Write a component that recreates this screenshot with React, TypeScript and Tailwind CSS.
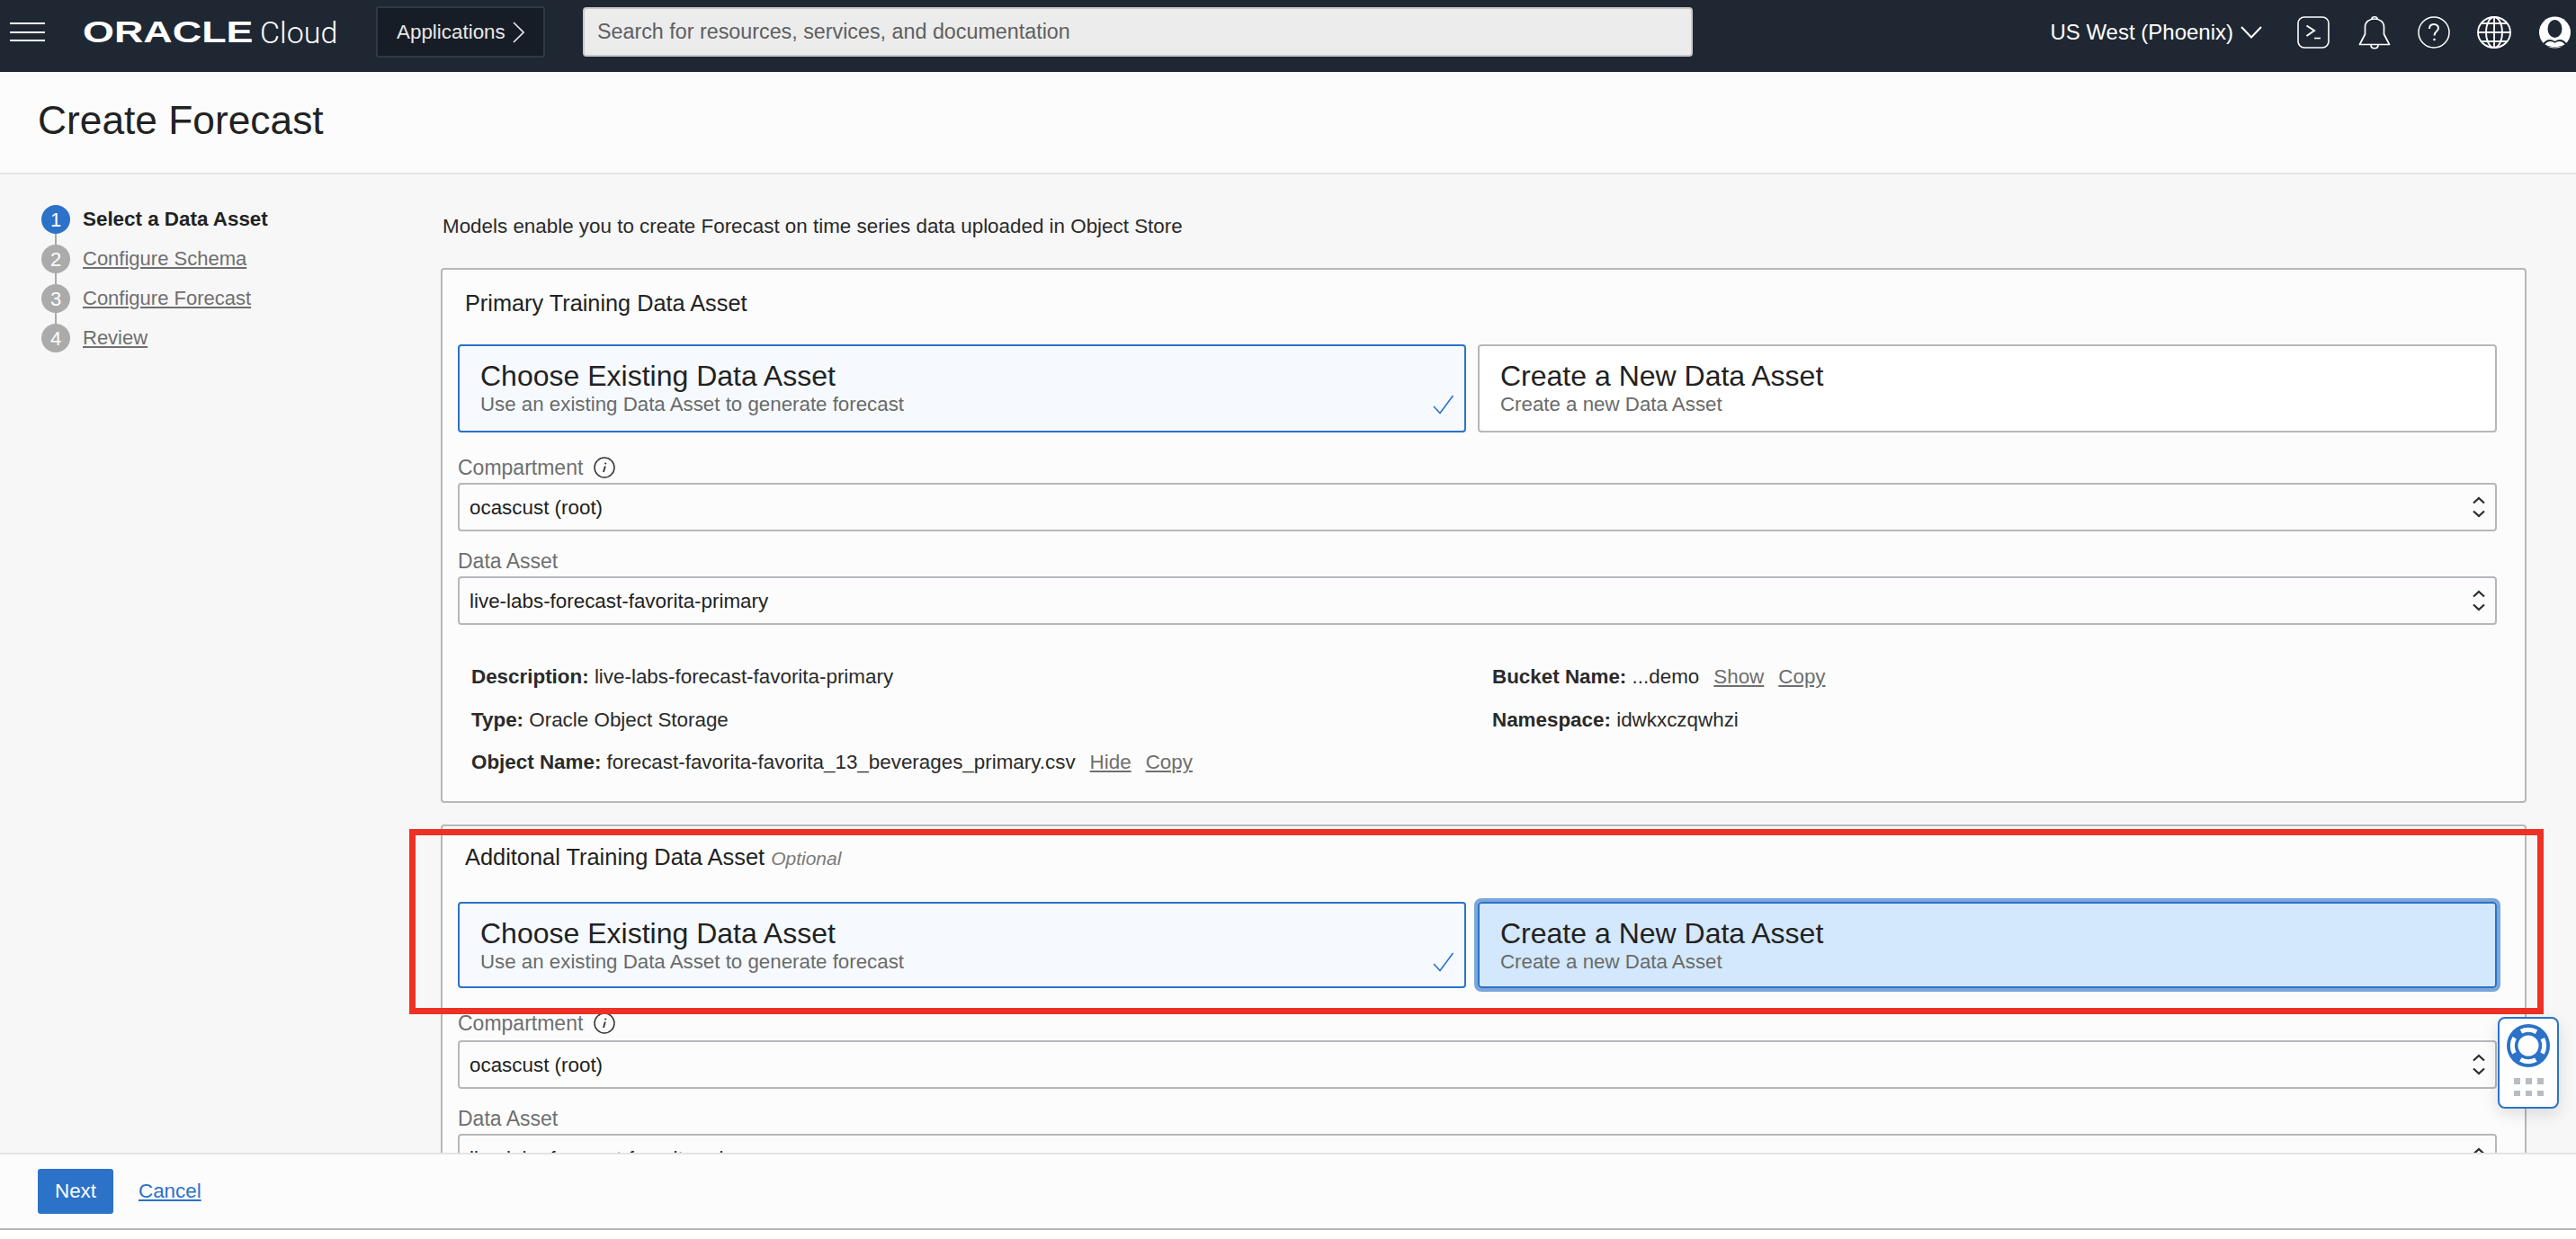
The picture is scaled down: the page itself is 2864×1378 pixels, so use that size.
const FONT = "font-['Liberation_Sans',Arial,sans-serif]";

function Hamburger() {
  return (
    <div className="flex flex-col justify-between w-[39px] h-[21px]">
      <div className="h-[2px] bg-white" />
      <div className="h-[2px] bg-white" />
      <div className="h-[2px] bg-white" />
    </div>
  );
}

function Terminal() {
  return (
    <svg width="36" height="36" viewBox="0 0 36 36" fill="none" stroke="white" strokeWidth="1.6">
      <rect x="1" y="1" width="34" height="34" rx="7" />
      <path d="M10.5 10.5 L19 16 L10.5 22" strokeWidth="2" />
      <path d="M19 24.5 H26" strokeWidth="1.6" />
    </svg>
  );
}

function Bell() {
  return (
    <svg width="36" height="38" viewBox="0 0 36 38" fill="none" stroke="white" strokeWidth="1.7" strokeLinejoin="round">
      <path d="M1.5 32.5 L7.5 21 V13 C7.5 7.5 12 4 18 4 C24 4 28.5 7.5 28.5 13 V21 L34.5 32.5 Z" />
      <path d="M15 4 C15 1 21 1 21 4" />
      <path d="M14 33 C14 38 22 38 22 33" />
    </svg>
  );
}

function Help() {
  return (
    <svg width="36" height="36" viewBox="0 0 36 36" fill="none" stroke="white" strokeWidth="1.5">
      <circle cx="18" cy="18" r="17" />
      <path d="M13 14 C13 10.5 15.5 9 18 9 C21 9 23 11 23 13.5 C23 16.5 18.5 17 18.5 21.5" strokeWidth="2" />
      <circle cx="18.5" cy="26" r="1.3" fill="white" stroke="none" />
    </svg>
  );
}

function Globe() {
  return (
    <svg width="38" height="36" viewBox="0 0 38 36" fill="none" stroke="white" strokeWidth="1.8">
      <ellipse cx="19" cy="18" rx="18" ry="17" />
      <ellipse cx="19" cy="18" rx="9" ry="17" />
      <path d="M19 1 V35" />
      <path d="M1 18 H37" />
      <path d="M4.5 8 H33.5" />
      <path d="M4.5 28 H33.5" />
    </svg>
  );
}

function Avatar() {
  return (
    <svg width="35" height="36" viewBox="0 0 35 36">
      <circle cx="17.5" cy="18" r="17.5" fill="white" />
      <ellipse cx="17.5" cy="14" rx="8" ry="10" fill="#1f2733" />
      <path d="M4 31 C8 25 13 25 17.5 28 C22 25 27 25 31 31 C27 33.5 22 34.5 17.5 34.5 C13 34.5 8 33.5 4 31 Z" fill="#1f2733" />
      <path d="M6.5 31.5 C10 27 14 27.5 17.5 30 C21 27.5 25 27 28.5 31.5 C25 33.5 21 34 17.5 34 C14 34 10 33.5 6.5 31.5 Z" fill="white" />
    </svg>
  );
}

function Chevrons() {
  return (
    <svg width="14" height="26" viewBox="0 0 14 26" fill="none" stroke="#2b2b2b" strokeWidth="2.2">
      <path d="M1 8.5 L7 3 L13 8.5" />
      <path d="M1 17.5 L7 23 L13 17.5" />
    </svg>
  );
}

function InfoIcon() {
  return (
    <svg width="24" height="24" viewBox="0 0 24 24" fill="none" stroke="#333" strokeWidth="1.5">
      <circle cx="12" cy="12" r="11" />
      <path d="M12.8 10.5 L11 17" strokeWidth="1.8" />
      <circle cx="13.2" cy="7.5" r="1.1" fill="#333" stroke="none" />
    </svg>
  );
}

function Tile({ title, sub, selected, focused, className }: { title: string; sub: string; selected?: boolean; focused?: boolean; className: string }) {
  const tone = selected
    ? "border-[#2b72c8] bg-[#f6faff]"
    : focused
      ? "border-[#2b72c8] bg-[#d3e8fc] outline-4 outline-[#7aa6db]"
      : "border-[#b5b8bb] bg-white";
  return (
    <div className={`relative border-2 rounded-[4px] pl-[23px] pt-[14px] ${tone} ${className}`}>
      <div className="text-[32px] leading-[39px] text-[#222]">{title}</div>
      <div className="text-[22.3px] leading-[24px] text-[#6a6a6a]">{sub}</div>
      {selected && (
        <svg className="absolute right-[11px] top-[54px]" width="24" height="22" viewBox="0 0 24 22" fill="none" stroke="#2b72c8" strokeWidth="1.6">
          <path d="M1 13 L8 20.5 L22.5 1" />
        </svg>
      )}
    </div>
  );
}

function SelectBox({ value }: { value: string }) {
  return (
    <div className="h-[54px] w-[2267px] shrink-0 flex items-center justify-between border-2 border-[#b5b8bb] rounded-[4px] bg-[#fcfcfc] pl-[11px] pr-[11px] text-[22.4px] text-[#1f1f1f]">
      <span className="pt-[2px]">{value}</span>
      <Chevrons />
    </div>
  );
}

function FieldLabel({ children, className }: { children: React.ReactNode; className: string }) {
  return <div className={`h-[24px] flex items-center gap-[12px] text-[23px] leading-[24px] text-[#6f6f6f] ${className}`}>{children}</div>;
}

function Detail({ label, value, links }: { label: string; value: string; links?: string[] }) {
  return (
    <div className="h-[32px] leading-[32px] text-[22.4px] text-[#2a2a2a] whitespace-nowrap">
      <span className="font-bold">{label}</span> {value}
      {links?.map((l) => (
        <span key={l} className="ml-[16px] text-[#6f6f6f] underline">{l}</span>
      ))}
    </div>
  );
}

export default function App() {
  const steps = ["Select a Data Asset", "Configure Schema", "Configure Forecast", "Review"];
  return (
    <div className={`relative h-[1378px] w-full overflow-hidden flex flex-col bg-white ${FONT}`}>
      <header className="h-[80px] shrink-0 pb-[9px] bg-[#1f2733] flex items-center text-white">
        <div className="ml-[11px] mr-[42px]"><Hamburger /></div>
        <div className="relative w-[183px] h-[34px] leading-[34px] mr-[14px]">
          <span className="absolute left-0 top-0 origin-left scale-x-[1.36] text-[33px] font-bold leading-[34px]">ORACLE</span>
        </div>
        <span className="font-['Roboto',sans-serif] font-light text-[34px] leading-[40px] w-[88px] mr-[41px]">Cloud</span>
        <div className="w-[188px] h-[57px] mr-[42px] flex items-center pl-[21px] gap-[8px] border-2 border-[#2f3a47] rounded-[3px] bg-[#171d26] text-[22.4px] text-[#e8e8e8]">
          Applications
          <svg width="13" height="24" viewBox="0 0 13 24" fill="none" stroke="#e8e8e8" strokeWidth="1.6"><path d="M1 1 L12 12 L1 23" /></svg>
        </div>
        <div className="w-[1234px] h-[55px] flex items-center pl-[14px] rounded-[4px] border-2 border-[#c9c9c9] bg-[#ececec] text-[23.3px] text-[#5f5f5f]">
          Search for resources, services, and documentation
        </div>
        <div className="ml-auto flex items-center">
          <span className="text-[24px] text-white">US West (Phoenix)</span>
          <svg className="ml-[8px] mr-[39px]" width="24" height="14" viewBox="0 0 24 14" fill="none" stroke="white" strokeWidth="2"><path d="M1 1 L12 12.5 L23 1" /></svg>
          <div className="flex items-center mr-[6px]">
            <div className="mr-[32px]"><Terminal /></div>
            <div className="mr-[30px]"><Bell /></div>
            <div className="mr-[30px]"><Help /></div>
            <div className="mr-[31px]"><Globe /></div>
            <Avatar />
          </div>
        </div>
      </header>

      <div className="h-[114px] shrink-0 bg-[#fcfcfc] border-b-2 border-[#e4e4e4] pl-[42px] pt-[29px]">
        <h1 className="text-[44.3px] leading-[50px] text-[#222]">Create Forecast</h1>
      </div>

      <div className="flex-1 min-h-0 flex bg-[#f7f7f7] overflow-hidden">
        <nav className="w-[490px] shrink-0 pl-[46px] pt-[34px]">
          {steps.map((s, i) => (
            <div key={s} className="relative h-[44px] flex items-start">
              {i < 3 && <div className="absolute left-[15px] top-[32px] w-[2px] h-[12px] bg-[#a9a9a9]" />}
              <div className={`w-[32px] h-[32px] rounded-full flex items-center justify-center text-[22px] text-white ${i === 0 ? "bg-[#2b72c8]" : "bg-[#ababab]"}`}>{i + 1}</div>
              <div className={`ml-[14px] leading-[32px] ${i === 0 ? "text-[22.4px] font-bold text-[#222]" : "text-[22px] text-[#6f6f6f] underline"}`}>{s}</div>
            </div>
          ))}
        </nav>

        <main className="flex-1 min-w-0 pr-[55px]">
          <p className="mt-[42px] ml-[2px] h-[32px] leading-[32px] text-[22.4px] text-[#2a2a2a]">Models enable you to create Forecast on time series data uploaded in Object Store</p>

          <section className="mt-[30px] h-[595px] border-2 border-[#b5b8bb] rounded-[4px] bg-[#fcfcfc] pl-[17px] pr-[31px]">
            <div className="pt-[21px] pl-[8px] h-[83px] text-[25.3px] leading-[32px] text-[#222]">Primary Training Data Asset</div>
            <div className="flex gap-[13px]">
              <Tile selected className="h-[98px] w-[1121px] shrink-0" title="Choose Existing Data Asset" sub="Use an existing Data Asset to generate forecast" />
              <Tile className="h-[98px] flex-1" title="Create a New Data Asset" sub="Create a new Data Asset" />
            </div>
            <FieldLabel className="mt-[27px] mb-[5px]">Compartment <InfoIcon /></FieldLabel>
            <SelectBox value="ocascust (root)" />
            <FieldLabel className="mt-[21px] mb-[5px]">Data Asset</FieldLabel>
            <SelectBox value="live-labs-forecast-favorita-primary" />
            <div className="mt-[42px] ml-[15px] grid grid-cols-[1135px_1fr] gap-y-[15.5px]">
              <Detail label="Description:" value="live-labs-forecast-favorita-primary" />
              <Detail label="Bucket Name:" value="...demo" links={["Show", "Copy"]} />
              <Detail label="Type:" value="Oracle Object Storage" />
              <Detail label="Namespace:" value="idwkxczqwhzi" />
              <Detail label="Object Name:" value="forecast-favorita-favorita_13_beverages_primary.csv" links={["Hide", "Copy"]} />
            </div>
          </section>

          <section className="mt-[24px] h-[500px] border-2 border-[#b5b8bb] rounded-[4px] bg-[#fcfcfc] pl-[17px] pr-[31px]">
            <div className="pt-[18px] pl-[8px] h-[84px] text-[25.4px] leading-[32px] text-[#222]">
              Additonal Training Data Asset <span className="italic text-[21px] text-[#7a7a7a]">Optional</span>
            </div>
            <div className="flex gap-[13px]">
              <Tile selected className="h-[96px] w-[1121px] shrink-0" title="Choose Existing Data Asset" sub="Use an existing Data Asset to generate forecast" />
              <Tile focused className="h-[96px] flex-1" title="Create a New Data Asset" sub="Create a new Data Asset" />
            </div>
            <FieldLabel className="mt-[27px] mb-[7px]">Compartment <InfoIcon /></FieldLabel>
            <SelectBox value="ocascust (root)" />
            <FieldLabel className="mt-[21px] mb-[5px]">Data Asset</FieldLabel>
            <SelectBox value="live-labs-forecast-favorita-ad" />
          </section>
        </main>
      </div>

      <footer className="h-[86px] shrink-0 bg-[#fcfcfc] border-t-2 border-b-2 border-t-[#e4e4e4] border-b-[#b5b8bb] flex items-center pl-[42px]">
        <div className="w-[84px] h-[50px] rounded-[3px] bg-[#2b72c8] text-white text-[22.4px] flex items-center justify-center">Next</div>
        <span className="ml-[28px] text-[22.4px] text-[#2b72c8] underline">Cancel</span>
      </footer>
      <div className="h-[10px] shrink-0 bg-white" />

      <div className="absolute left-[455px] top-[922px] w-[2373px] h-[206px] border-[7px] border-[#ee3124] pointer-events-none" />

      <div className="absolute left-[2777px] top-[1131px] w-[68px] h-[102px] rounded-[8px] border-2 border-[#2b72c8] bg-white shadow-[0_6px_18px_rgba(0,0,0,0.12)] flex flex-col items-center pt-[6px]">
        <svg width="48" height="48" viewBox="0 0 48 48">
          <circle cx="24" cy="24" r="24" fill="#2b72c8" />
          <circle cx="24" cy="24" r="17.7" fill="none" stroke="white" strokeWidth="5" strokeDasharray="17.8 10" strokeDashoffset="8.9" />
          <circle cx="24" cy="24" r="11.5" fill="white" />
        </svg>
        <div className="mt-[12px] grid grid-cols-3 gap-x-[6px] gap-y-[7px]">
          {[0, 1, 2, 3, 4, 5].map((d) => (
            <div key={d} className="w-[7px] h-[6.5px] bg-[#b9bcc0]" />
          ))}
        </div>
      </div>
    </div>
  );
}
